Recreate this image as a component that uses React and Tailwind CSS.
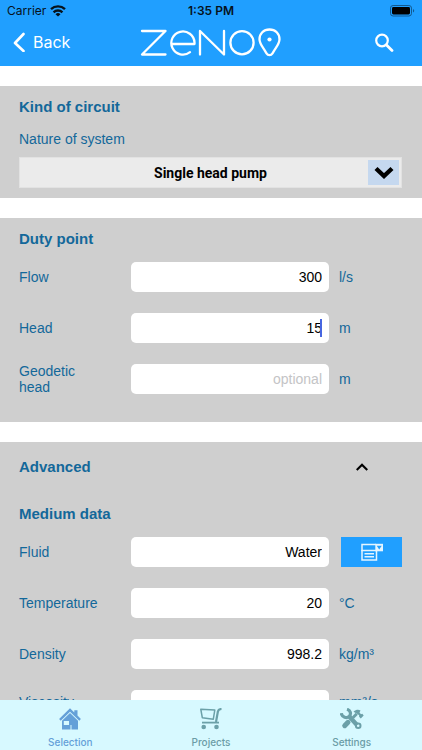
import React from "react";

const fields = "font-['Liberation_Sans',Arial,sans-serif]";

function WifiIcon() {
  return (
    <svg viewBox="0 0 16 12" className="h-3 w-4" fill="none" stroke="#06121c" strokeWidth="2.4" aria-hidden="true">
      <path d="M1 4.200a10.200 10.200 0 0 1 14 0" />
      <path d="M3.600 7.300a6.300 6.300 0 0 1 8.800 0" />
      <path d="M8 11.600 5.500 9.200a3.600 3.600 0 0 1 5 0z" fill="#06121c" stroke="none" />
    </svg>
  );
}

function BatteryIcon() {
  return (
    <svg viewBox="0 0 25 12" className="h-3 w-[25px]" aria-hidden="true">
      <rect x="0.5" y="0.5" width="21" height="10.5" rx="2.6" fill="none" stroke="#12598f" />
      <rect x="2" y="2" width="18" height="7.5" rx="1.4" fill="#000" />
      <path d="M23 4v3.600c1.600-.6 1.600-3 0-3.600z" fill="#12598f" />
    </svg>
  );
}

function Logo() {
  return (
    <svg viewBox="0 0 142 30" className="h-[30px] w-[142px]" fill="none" stroke="#fff" strokeWidth="2.3" strokeLinecap="round" strokeLinejoin="round" role="img" aria-label="Zeno">
      <path d="M2 4h23.500L2 27.500h23.500" />
      <path d="M31.500 17H54.500V15.500A11.600 11.600 0 1 0 50 25.200" />
      <path d="M60 27.500V4l24 23.500V4" />
      <circle cx="102" cy="15.700" r="11.600" />
      <path d="M129.500 2.500c-6 0-10 4.200-10 9.700 0 4 2.600 7.200 5.200 11.200l1.800 3c1.500 2.400 4.500 2.400 6 0l1.800-3c2.600-4 5.200-7.200 5.200-11.200 0-5.500-4-9.700-10-9.700z" />
      <circle cx="129.500" cy="12.500" r="2.100" fill="#fff" stroke="none" />
    </svg>
  );
}

function PickerIcon() {
  return (
    <svg viewBox="0 0 22 18" className="h-[18px] w-[22px]" fill="none" stroke="#e4f5ff" strokeWidth="1.500" aria-hidden="true">
      <path d="M15 7.500H1v-6h14" />
      <path d="M1 7v10h14.500V7" />
      <path d="M3.500 10.800h9.500M3.500 13.800h9.500" />
      <path d="M14.300.8H22v7.500h-7.700z" fill="#e4f5ff" stroke="none" />
      <path d="M15.700 2.800h5l-2.500 3.700z" fill="#209fff" stroke="none" />
    </svg>
  );
}

function HomeIcon() {
  return (
    <svg viewBox="0 0 22 22" className="size-[22px]" fill="#64a0d8" aria-hidden="true">
      <path d="M11 .3 15.300 4.500V2.200H18.500v5.400l3.400 3.400-1.600 1.700L11 3.700l-9.300 9L.1 11z" />
      <path fillRule="evenodd" d="M11 5l8 7.700V21.500H3v-8.800zM4.800 13v4H10v-4zM11.500 13v4h1v4.500h-1z" />
    </svg>
  );
}

function CartIcon() {
  return (
    <svg viewBox="0 0 22 22" className="size-[22px]" fill="none" stroke="#6ba0a8" strokeWidth="1.500" strokeLinejoin="round" aria-hidden="true">
      <path d="M.8 1.300 14.800 2l-1.500 9.200L2.300 9.700z" />
      <path d="M21.500 1c-2 0-3.200.6-3.600 2.500L16 14" strokeWidth="2.200" />
      <path d="M2 14.600h17" strokeWidth="1.800" />
      <circle cx="3.700" cy="19" r="2.300" fill="#6ba0a8" stroke="none" />
      <circle cx="16.500" cy="19" r="2.300" fill="#6ba0a8" stroke="none" />
    </svg>
  );
}

function ToolsIcon() {
  return (
    <svg viewBox="0 0 24 22" className="h-[22px] w-6" fill="none" stroke="#6ba0a8" aria-hidden="true">
      <path d="M1.300 5.200C1.800 9.200 7 10.800 9.200 8.300 11.500 6 10.500 2.300 7 1.300" strokeWidth="3.200" />
      <path d="M9 8.300l8 8.700" strokeWidth="4.400" />
      <circle cx="18.200" cy="17.800" r="2.300" strokeWidth="2" />
      <path d="M8 14.300l-3.300 3.400" strokeWidth="5" strokeLinecap="round" />
      <path d="M12.800 9.700l4-4" strokeWidth="3" />
      <path d="M13.500 3.800c2.500-2.300 5-2.300 7-1.300l-1 2 1.500 1.700 1.300-.4 1.400 1.700-2.900 2.900-1.700-1.600v-1.500l-2-1.600z" fill="#6ba0a8" stroke="none" />
    </svg>
  );
}

function Heading({ children }) {
  return <h2 className="text-[15px] leading-5 font-bold">{children}</h2>;
}

function Row({ id, label, value, placeholder, unit, caret, action, top }) {
  const line = top ? "leading-6" : "leading-4";
  return (
    <div className={"grid grid-cols-[112px_1fr_73px] " + (top ? "items-start" : "items-center")}>
      <label htmlFor={id} className={"pr-8 " + line}>{label}</label>
      <div className="relative">
        <input
          id={id}
          defaultValue={value}
          placeholder={placeholder}
          className="block h-[30px] w-full rounded-[5px] bg-white px-[7px] text-right text-black outline-none placeholder:text-[#c4c4c6]"
        />
        {caret && <span className="absolute top-1.5 right-[7px] h-[18px] w-0.5 bg-[#4766e0]" />}
      </div>
      {action ? (
        <button type="button" aria-label="Choose fluid" className="ml-3 flex h-[30px] items-center justify-center bg-[#209fff]">
          <PickerIcon />
        </button>
      ) : (
        <span className={"pl-2.5 " + line}>{unit}</span>
      )}
    </div>
  );
}

function Tab({ icon, label, active }) {
  return (
    <a
      href={"#" + label.toLowerCase()}
      aria-current={active ? "page" : undefined}
      className={"flex flex-1 flex-col items-center gap-1 pt-2 text-[10px] leading-4 font-medium " + (active ? "text-[#64a0d8]" : "text-[#6b9ca6]")}
    >
      {icon}
      {label}
    </a>
  );
}

export default function App() {
  return (
    <div className="flex h-screen flex-col bg-white font-[Inter,sans-serif]">
      <header className="bg-[#209fff] pb-1">
        <div className="grid h-[22px] grid-cols-3 items-center px-[7px] text-xs text-[#06121c]">
          <span className="flex items-center gap-1">Carrier <WifiIcon /></span>
          <span className="text-center font-semibold">1:35 PM</span>
          <span className="flex justify-end"><BatteryIcon /></span>
        </div>
        <div className="grid h-10 grid-cols-[1fr_auto_1fr] items-center px-3 text-white">
          <button type="button" className="flex items-center gap-2 text-base">
            <svg viewBox="0 0 13 20" className="h-5 w-[13px]" fill="none" stroke="currentColor" strokeWidth="2.600" strokeLinecap="round" strokeLinejoin="round" aria-hidden="true">
              <path d="M11.500 2 3 11l8.500 8" />
            </svg>
            Back
          </button>
          <Logo />
          <button type="button" aria-label="Search" className="mr-4 justify-self-end">
            <svg viewBox="0 0 20 20" className="size-5" fill="none" stroke="currentColor" strokeWidth="2.200" strokeLinecap="round" aria-hidden="true">
              <circle cx="8" cy="8.500" r="5.800" />
              <path d="m12.500 13 5.500 5.500" strokeWidth="2.800" />
            </svg>
          </button>
        </div>
      </header>

      <main className={"flex min-h-0 flex-1 flex-col gap-5 overflow-y-auto pt-5 text-sm text-[#13689a] [scrollbar-width:none] " + fields}>
        <section className="shrink-0 bg-[#cfcfcf] pt-[11px] pr-5 pb-2.5 pl-[19px]">
          <Heading>Kind of circuit</Heading>
          <label htmlFor="system" className="mt-3 block leading-5">Nature of system</label>
          <div className="relative mt-2">
            <select id="system" className="block h-[31px] w-full appearance-none border border-[#e2e2e2] bg-[#ebebeb] text-center font-[Roboto,sans-serif] text-sm font-bold text-black [text-align-last:center]">
              <option>Single head pump</option>
            </select>
            <span className="pointer-events-none absolute inset-y-[3px] right-[3px] flex w-[31px] items-center justify-center bg-[#c5d8ef]">
              <svg viewBox="0 0 20 13" className="h-[13px] w-5" fill="none" stroke="#000" strokeWidth="4.400" aria-hidden="true">
                <path d="m2 2.500 8 7.500 8-7.500" />
              </svg>
            </span>
          </div>
        </section>

        <section className="shrink-0 bg-[#cfcfcf] pt-[11px] pr-5 pb-7 pl-[19px]">
          <Heading>Duty point</Heading>
          <div className="mt-[13px] flex flex-col gap-[21px]">
            <Row id="flow" label="Flow" value="300" unit="l/s" />
            <Row id="head" label="Head" value="15" unit="m" caret />
            <div className="-my-px">
              <Row id="geodetic" label="Geodetic head" placeholder="optional" unit="m" />
            </div>
          </div>
        </section>

        <section className="shrink-0 bg-[#cfcfcf] pt-[15px] pr-5 pb-7 pl-[19px]">
          <button type="button" aria-expanded="true" className="flex w-full items-center justify-between pr-[34px]">
            <Heading>Advanced</Heading>
            <svg viewBox="0 0 12 8" className="h-2 w-3" fill="none" stroke="#000" strokeWidth="2.200" aria-hidden="true">
              <path d="m.7 7 5.300-5.300L11.300 7" />
            </svg>
          </button>
          <div className="mt-[27px]">
            <Heading>Medium data</Heading>
          </div>
          <div className="mt-[13px] flex flex-col gap-[21px]">
            <Row id="fluid" label="Fluid" value="Water" action />
            <Row id="temperature" label="Temperature" value="20" unit="°C" />
            <Row id="density" label="Density" value="998.2" unit="kg/m³" />
            <Row id="viscosity" label="Viscosity" value="1" unit="mm²/s" top />
          </div>
        </section>
      </main>

      <nav className="flex h-[50px] shrink-0 bg-[#d7f9ff]">
        <Tab icon={<HomeIcon />} label="Selection" active />
        <Tab icon={<CartIcon />} label="Projects" />
        <Tab icon={<ToolsIcon />} label="Settings" />
      </nav>
    </div>
  );
}
